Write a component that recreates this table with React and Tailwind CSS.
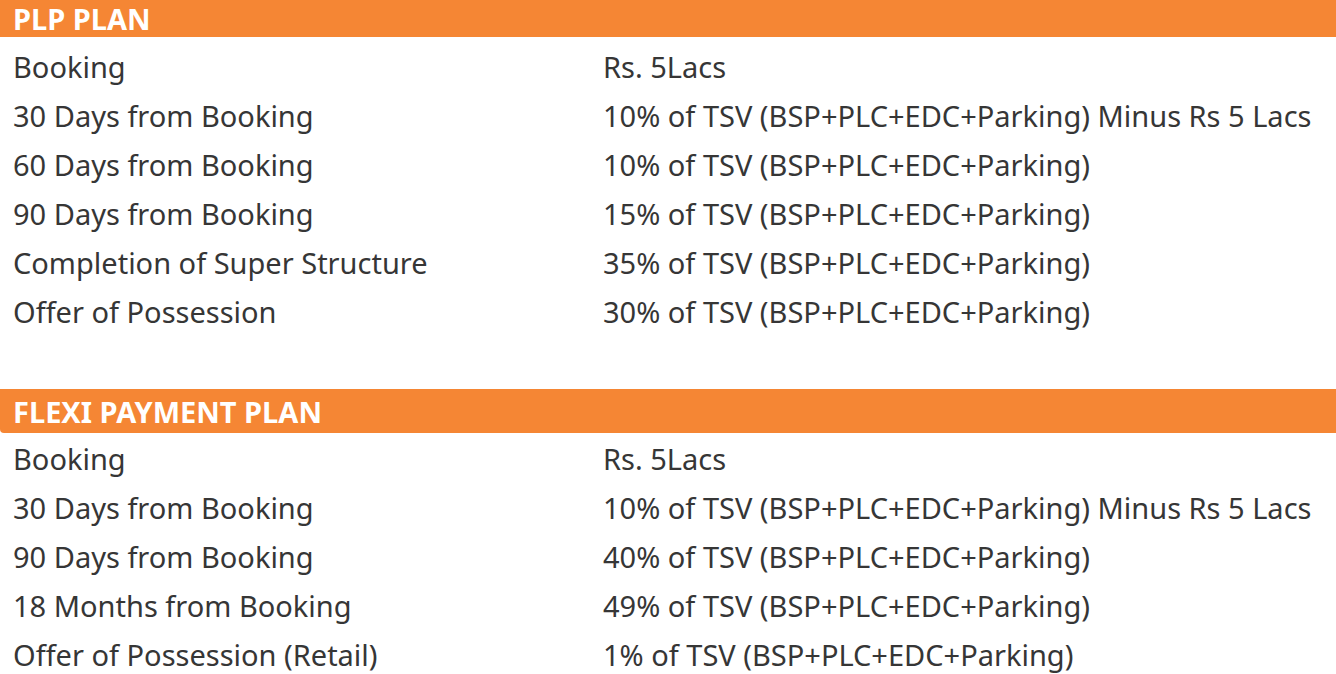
export default function App() {
  const plp = [
    ["Booking", "Rs. 5Lacs"],
    ["30 Days from Booking", "10% of TSV (BSP+PLC+EDC+Parking) Minus Rs 5 Lacs"],
    ["60 Days from Booking", "10% of TSV (BSP+PLC+EDC+Parking)"],
    ["90 Days from Booking", "15% of TSV (BSP+PLC+EDC+Parking)"],
    ["Completion of Super Structure", "35% of TSV (BSP+PLC+EDC+Parking)"],
    ["Offer of Possession", "30% of TSV (BSP+PLC+EDC+Parking)"],
  ];
  const flexi = [
    ["Booking", "Rs. 5Lacs"],
    ["30 Days from Booking", "10% of TSV (BSP+PLC+EDC+Parking) Minus Rs 5 Lacs"],
    ["90 Days from Booking", "40% of TSV (BSP+PLC+EDC+Parking)"],
    ["18 Months from Booking", "49% of TSV (BSP+PLC+EDC+Parking)"],
    ["Offer of Possession (Retail)", "1% of TSV (BSP+PLC+EDC+Parking)"],
  ];
  const Row = ({ a, b }) => (
    <div className="flex h-[49px] items-center text-[29px] text-[#363636]">
      <div className="w-[603px] shrink-0 pl-[13px] whitespace-nowrap">{a}</div>
      <div className="whitespace-nowrap">{b}</div>
    </div>
  );
  return (
    <div
      className="w-[1336px] h-[674px] overflow-hidden bg-white"
      style={{ fontFamily: '"Noto Sans", sans-serif' }}
    >
      <div className="h-[37px] bg-[#f58634] flex items-center pl-[13px]">
        <span className="text-white font-bold text-[29px] leading-none">PLP PLAN</span>
      </div>
      <div className="pt-[5px]">
        {plp.map(([a, b], i) => (
          <Row key={i} a={a} b={b} />
        ))}
      </div>
      <div className="mt-[53px] h-[44px] bg-[#f58634] flex items-center pl-[13px] rounded-bl-[4px]">
        <span className="text-white font-bold text-[29px] leading-none">FLEXI PAYMENT PLAN</span>
      </div>
      <div className="pt-[1px]">
        {flexi.map(([a, b], i) => (
          <Row key={i} a={a} b={b} />
        ))}
      </div>
    </div>
  );
}
